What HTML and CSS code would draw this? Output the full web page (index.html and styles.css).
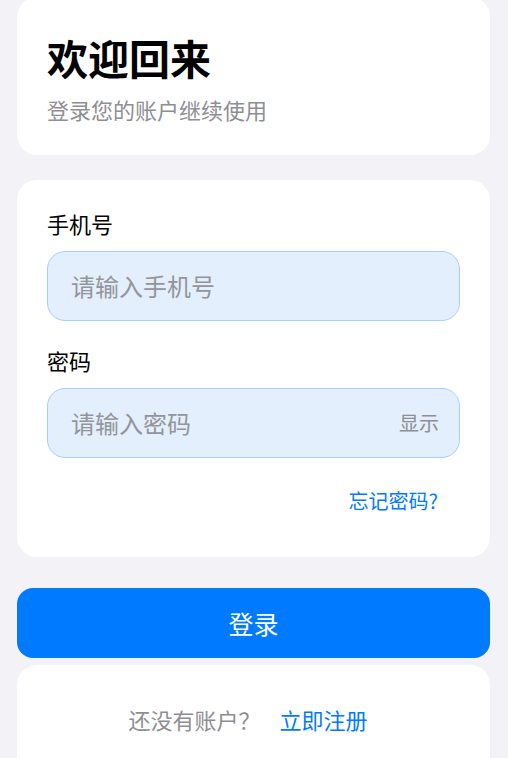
FILE: index.html
```html
<!DOCTYPE html>
<html lang="zh-CN">
<head>
<meta charset="utf-8">
<title>登录</title>
<link rel="stylesheet" href="styles.css">
</head>
<body>
<main class="page">
  <section class="card hero">
    <h1 class="title">欢迎回来</h1>
    <p class="subtitle">登录您的账户继续使用</p>
  </section>

  <section class="card form">
    <div class="field">
      <label class="label" for="phone">手机号</label>
      <div class="input-box">
        <input id="phone" class="input" type="tel" placeholder="请输入手机号">
      </div>
    </div>
    <div class="field">
      <label class="label" for="pwd">密码</label>
      <div class="input-box">
        <input id="pwd" class="input" type="password" placeholder="请输入密码">
        <span class="toggle">显示</span>
      </div>
    </div>
    <div class="forgot-row">
      <a class="forgot" href="#">忘记密码?</a>
    </div>
  </section>

  <button class="login-btn" type="button">登录</button>

  <section class="card footer">
    <span class="muted">还没有账户？</span>
    <a class="register" href="#">立即注册</a>
  </section>
</main>
</body>
</html>
```

FILE: styles.css
```css
* {
  box-sizing: border-box;
}

html, body {
  margin: 0;
  padding: 0;
  background: #f2f2f7;
  font-family: "Noto Sans CJK SC", "Noto Sans", sans-serif;
  color: #000;
  overflow: hidden;
}

.page {
  display: flex;
  flex-direction: column;
  padding: 0 18px 0 17px;
  margin-top: -3px;
}

.card {
  background: #fff;
  border-radius: 20px;
}

.hero {
  padding: 35px 30px 31px;
}

.title {
  margin: 0;
  font-size: 41px;
  line-height: 50px;
  font-weight: 700;
}

.subtitle {
  margin: 12px 0 0;
  font-size: 22px;
  line-height: 30px;
  color: #8e8e93;
}

.form {
  margin-top: 25px;
  padding: 28px 30px 34px;
  display: flex;
  flex-direction: column;
  gap: 24px;
}

.field {
  display: flex;
  flex-direction: column;
  gap: 13px;
}

.label {
  font-size: 22px;
  line-height: 30px;
  color: #000;
}

.input-box {
  display: flex;
  align-items: center;
  height: 70px;
  padding: 0 20px 0 23px;
  background: #e3effd;
  border: 1px solid #a6cffa;
  border-radius: 18px;
}

.input {
  flex: 1;
  min-width: 0;
  border: 0;
  outline: none;
  background: transparent;
  padding: 0;
  font-family: inherit;
  font-size: 24px;
  line-height: 34px;
  color: #000;
}

.input::placeholder {
  color: #949499;
}

.toggle {
  font-size: 20px;
  line-height: 28px;
  color: #8e8e93;
}

.forgot-row {
  display: flex;
  justify-content: flex-end;
  margin-top: -3px;
}

.forgot {
  padding: 8px 22px;
  font-size: 20px;
  line-height: 28px;
  color: #007aff;
  text-decoration: none;
}

.login-btn {
  margin-top: 31px;
  height: 70px;
  border: 0;
  border-radius: 16px;
  background: #007aff;
  color: #fff;
  font-family: inherit;
  font-size: 25px;
  line-height: 34px;
}

.footer {
  margin-top: 7px;
  padding: 39px 30px 60px;
  display: flex;
  justify-content: center;
  align-items: center;
  gap: 8px;
  font-size: 22px;
  line-height: 30px;
}

.muted {
  color: #8e8e93;
}

.register {
  padding: 0 11px;
  color: #007aff;
  text-decoration: none;
}
```
